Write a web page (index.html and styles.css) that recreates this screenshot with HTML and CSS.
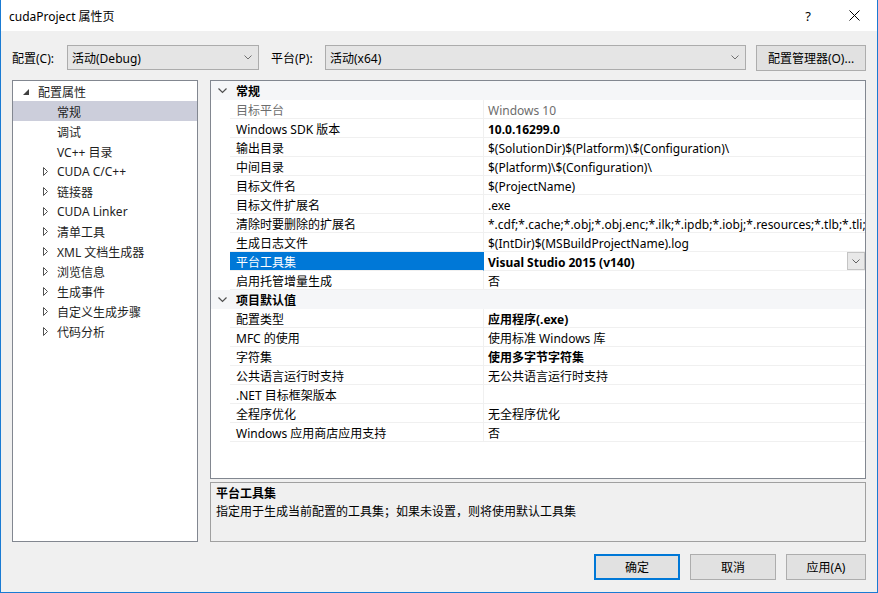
FILE: index.html
```html
<!DOCTYPE html>
<html lang="zh-CN">
<head>
  <meta charset="UTF-8">
  <title>cudaProject 属性页</title>
  <link rel="stylesheet" href="styles.css">
</head>
<body>
  <div class="window">
    <div class="titlebar">
      <span class="title">cudaProject 属性页</span>
      <span class="caption-btn">?</span>
      <span class="caption-btn">
        <svg width="11" height="11" viewBox="0 0 11 11"><path d="M0.5 0.5L10.5 10.5M10.5 0.5L0.5 10.5" stroke="#000" stroke-width="1"/></svg>
      </span>
    </div>

    <div class="toolbar">
      <span class="label cfg-label">配置(C):</span>
      <div class="combo cfg-combo">
        <span class="combo-text">活动(Debug)</span>
        <svg class="combo-arrow" width="8" height="5" viewBox="0 0 8 5"><path d="M0.5 0.5L4 4L7.5 0.5" fill="none" stroke="#707070"/></svg>
      </div>
      <span class="label plat-label">平台(P):</span>
      <div class="combo plat-combo">
        <span class="combo-text">活动(x64)</span>
        <svg class="combo-arrow" width="8" height="5" viewBox="0 0 8 5"><path d="M0.5 0.5L4 4L7.5 0.5" fill="none" stroke="#707070"/></svg>
      </div>
      <button class="btn mgr-btn">配置管理器(O)...</button>
    </div>

    <div class="main">
      <div class="tree">
        <div class="tree-row lvl0">
          <span class="twisty"><svg width="6" height="6" viewBox="0 0 6 6"><path d="M6 0V6H0Z" fill="#404040"/></svg></span>
          配置属性
        </div>
        <div class="tree-row lvl1 selected"><span class="twisty"></span>常规</div>
        <div class="tree-row lvl1"><span class="twisty"></span>调试</div>
        <div class="tree-row lvl1"><span class="twisty"></span>VC++ 目录</div>
        <div class="tree-row lvl1"><span class="twisty"><svg width="6" height="9" viewBox="0 0 6 9"><path d="M0.5 0.5L4.5 4.5L0.5 8.5Z" fill="none" stroke="#505050"/></svg></span>CUDA C/C++</div>
        <div class="tree-row lvl1"><span class="twisty"><svg width="6" height="9" viewBox="0 0 6 9"><path d="M0.5 0.5L4.5 4.5L0.5 8.5Z" fill="none" stroke="#505050"/></svg></span>链接器</div>
        <div class="tree-row lvl1"><span class="twisty"><svg width="6" height="9" viewBox="0 0 6 9"><path d="M0.5 0.5L4.5 4.5L0.5 8.5Z" fill="none" stroke="#505050"/></svg></span>CUDA Linker</div>
        <div class="tree-row lvl1"><span class="twisty"><svg width="6" height="9" viewBox="0 0 6 9"><path d="M0.5 0.5L4.5 4.5L0.5 8.5Z" fill="none" stroke="#505050"/></svg></span>清单工具</div>
        <div class="tree-row lvl1"><span class="twisty"><svg width="6" height="9" viewBox="0 0 6 9"><path d="M0.5 0.5L4.5 4.5L0.5 8.5Z" fill="none" stroke="#505050"/></svg></span>XML 文档生成器</div>
        <div class="tree-row lvl1"><span class="twisty"><svg width="6" height="9" viewBox="0 0 6 9"><path d="M0.5 0.5L4.5 4.5L0.5 8.5Z" fill="none" stroke="#505050"/></svg></span>浏览信息</div>
        <div class="tree-row lvl1"><span class="twisty"><svg width="6" height="9" viewBox="0 0 6 9"><path d="M0.5 0.5L4.5 4.5L0.5 8.5Z" fill="none" stroke="#505050"/></svg></span>生成事件</div>
        <div class="tree-row lvl1"><span class="twisty"><svg width="6" height="9" viewBox="0 0 6 9"><path d="M0.5 0.5L4.5 4.5L0.5 8.5Z" fill="none" stroke="#505050"/></svg></span>自定义生成步骤</div>
        <div class="tree-row lvl1"><span class="twisty"><svg width="6" height="9" viewBox="0 0 6 9"><path d="M0.5 0.5L4.5 4.5L0.5 8.5Z" fill="none" stroke="#505050"/></svg></span>代码分析</div>
      </div>

      <div class="right">
        <div class="grid">
          <div class="grid-row category">
            <span class="gutter"><svg width="9" height="6" viewBox="0 0 9 6"><path d="M0.5 0.5L4.5 4.5L8.5 0.5" fill="none" stroke="#505050" stroke-width="1.2"/></svg></span>
            <span class="cat-name">常规</span>
          </div>
          <div class="grid-row disabled"><span class="gutter"></span><span class="name">目标平台</span><span class="value">Windows 10</span></div>
          <div class="grid-row"><span class="gutter"></span><span class="name">Windows SDK 版本</span><span class="value bold">10.0.16299.0</span></div>
          <div class="grid-row"><span class="gutter"></span><span class="name">输出目录</span><span class="value">$(SolutionDir)$(Platform)\$(Configuration)\</span></div>
          <div class="grid-row"><span class="gutter"></span><span class="name">中间目录</span><span class="value">$(Platform)\$(Configuration)\</span></div>
          <div class="grid-row"><span class="gutter"></span><span class="name">目标文件名</span><span class="value">$(ProjectName)</span></div>
          <div class="grid-row"><span class="gutter"></span><span class="name">目标文件扩展名</span><span class="value">.exe</span></div>
          <div class="grid-row"><span class="gutter"></span><span class="name">清除时要删除的扩展名</span><span class="value">*.cdf;*.cache;*.obj;*.obj.enc;*.ilk;*.ipdb;*.iobj;*.resources;*.tlb;*.tli;*.tlh;*.tmp;*.rsp</span></div>
          <div class="grid-row"><span class="gutter"></span><span class="name">生成日志文件</span><span class="value">$(IntDir)$(MSBuildProjectName).log</span></div>
          <div class="grid-row active">
            <span class="gutter"></span><span class="name">平台工具集</span>
            <span class="value bold">Visual Studio 2015 (v140)
              <span class="drop-btn"><svg width="8" height="5" viewBox="0 0 8 5"><path d="M0.5 0.5L4 4L7.5 0.5" fill="none" stroke="#606060"/></svg></span>
            </span>
          </div>
          <div class="grid-row"><span class="gutter"></span><span class="name">启用托管增量生成</span><span class="value">否</span></div>
          <div class="grid-row category">
            <span class="gutter"><svg width="9" height="6" viewBox="0 0 9 6"><path d="M0.5 0.5L4.5 4.5L8.5 0.5" fill="none" stroke="#505050" stroke-width="1.2"/></svg></span>
            <span class="cat-name">项目默认值</span>
          </div>
          <div class="grid-row"><span class="gutter"></span><span class="name">配置类型</span><span class="value bold">应用程序(.exe)</span></div>
          <div class="grid-row"><span class="gutter"></span><span class="name">MFC 的使用</span><span class="value">使用标准 Windows 库</span></div>
          <div class="grid-row"><span class="gutter"></span><span class="name">字符集</span><span class="value bold">使用多字节字符集</span></div>
          <div class="grid-row"><span class="gutter"></span><span class="name">公共语言运行时支持</span><span class="value">无公共语言运行时支持</span></div>
          <div class="grid-row"><span class="gutter"></span><span class="name">.NET 目标框架版本</span><span class="value"></span></div>
          <div class="grid-row"><span class="gutter"></span><span class="name">全程序优化</span><span class="value">无全程序优化</span></div>
          <div class="grid-row"><span class="gutter"></span><span class="name">Windows 应用商店应用支持</span><span class="value">否</span></div>
        </div>

        <div class="desc">
          <div class="desc-title">平台工具集</div>
          <div class="desc-text">指定用于生成当前配置的工具集；如果未设置，则将使用默认工具集</div>
        </div>
      </div>
    </div>

    <div class="footer">
      <button class="btn ok-btn">确定</button>
      <button class="btn cancel-btn">取消</button>
      <button class="btn apply-btn">应用(A)</button>
    </div>
  </div>
</body>
</html>
```

FILE: styles.css
```css
body {
  margin: 0;
  font-family: "Segoe UI", "Noto Sans", "Noto Sans CJK SC", sans-serif;
  font-size: 12px;
  color: #000;
}

.window {
  width: 878px;
  height: 593px;
  box-sizing: border-box;
  border: 1px solid #1a7bd3;
  border-top: none;
  background: #f0f0f0;
  display: flex;
  flex-direction: column;
  overflow: hidden;
}

/* title bar */
.titlebar {
  height: 31px;
  flex-shrink: 0;
  background: #fff;
  display: flex;
  align-items: center;
  padding-left: 8px;
}

.title {
  flex: 1;
}

.caption-btn {
  width: 46px;
  height: 31px;
  display: flex;
  align-items: center;
  justify-content: center;
  font-size: 13px;
}

/* config / platform row */
.toolbar {
  display: flex;
  align-items: center;
  height: 25px;
  margin-top: 14px;
  padding-left: 11px;
}

.label {
  flex-shrink: 0;
}

.cfg-label {
  width: 55px;
}

.plat-label {
  width: 54px;
  margin-left: 12px;
}

.combo {
  height: 25px;
  box-sizing: border-box;
  border: 1px solid #acacac;
  background: #e5e5e5;
  display: flex;
  align-items: center;
  padding-left: 4px;
  padding-right: 6px;
}

.combo-text {
  flex: 1;
}

.cfg-combo {
  width: 192px;
}

.plat-combo {
  width: 421px;
}

.btn {
  font-family: inherit;
  font-size: 12px;
  color: #000;
  background: #e1e1e1;
  border: 1px solid #adadad;
  padding: 0;
  box-sizing: border-box;
}

.mgr-btn {
  width: 110px;
  height: 26px;
  margin-left: 10px;
}

/* main area */
.main {
  display: flex;
  margin-top: 10px;
  height: 462px;
}

.tree {
  margin-left: 11px;
  width: 186px;
  box-sizing: border-box;
  border: 1px solid #828790;
  background: #fff;
}

.tree-row {
  height: 20px;
  display: flex;
  align-items: center;
  padding-top: 1px;
  box-sizing: border-box;
  color: #1e1e1e;
}

.twisty {
  display: flex;
  align-items: center;
}

.lvl0 {
  padding-left: 10px;
}

.lvl0 .twisty {
  width: 15px;
}

.lvl1 {
  padding-left: 30px;
}

.lvl1 .twisty {
  width: 14px;
}

.tree-row.selected {
  background: #cccedb;
}

.right {
  margin-left: 12px;
  width: 656px;
  display: flex;
  flex-direction: column;
  gap: 3px;
}

/* property grid */
.grid {
  height: 399px;
  flex-shrink: 0;
  box-sizing: border-box;
  border: 1px solid #828790;
  background: #fff;
  overflow: hidden;
}

.grid-row {
  display: flex;
  height: 19px;
}

.gutter {
  width: 19px;
  flex-shrink: 0;
  display: flex;
  align-items: center;
  justify-content: center;
  padding-left: 4px;
  padding-top: 1px;
  box-sizing: border-box;
}

.name,
.value {
  box-sizing: border-box;
  height: 19px;
  padding-top: 3px;
  line-height: 15px;
  border-bottom: 1px solid #f0f0f0;
  white-space: nowrap;
  overflow: hidden;
}

.name {
  width: 254px;
  flex-shrink: 0;
  padding-left: 6px;
  border-right: 1px solid #f0f0f0;
}

.value {
  width: 381px;
  flex-shrink: 0;
  padding-left: 4px;
  position: relative;
}

.category {
  background: #f5f6f8;
}

.cat-name {
  padding-left: 6px;
  padding-top: 1px;
  line-height: 19px;
  font-weight: bold;
}

.disabled .name,
.disabled .value {
  color: #6d6d6d;
}

.bold {
  font-weight: bold;
}

.active .name {
  background: #0078d7;
  color: #fff;
  border-right-color: #0078d7;
}

.drop-btn {
  position: absolute;
  right: 0;
  top: 0;
  width: 18px;
  height: 18px;
  box-sizing: border-box;
  border: 1px solid #c4c4c4;
  background: #e8e8e8;
  display: flex;
  align-items: center;
  justify-content: center;
}

/* description box */
.desc {
  height: 60px;
  box-sizing: border-box;
  border: 1px solid #a0a0a0;
  padding: 2px 5px;
  line-height: 18px;
}

.desc-title {
  font-weight: bold;
}

/* dialog buttons */
.footer {
  display: flex;
  justify-content: flex-end;
  gap: 10px;
  margin-top: 12px;
  padding-right: 11px;
}

.footer .btn {
  height: 26px;
}

.ok-btn {
  width: 86px;
  border: 2px solid #0078d7;
}

.cancel-btn {
  width: 86px;
}

.apply-btn {
  width: 80px;
}
```
